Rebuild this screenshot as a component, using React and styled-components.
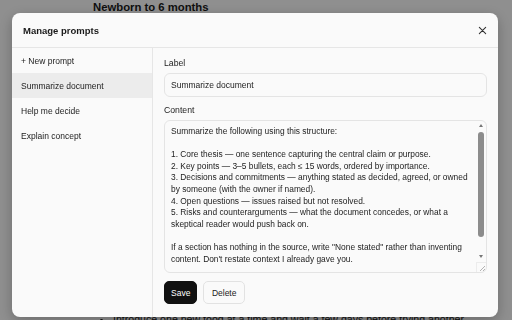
import React from 'react'
import styled, { createGlobalStyle } from 'styled-components'

const prompts = ['Summarize document', 'Help me decide', 'Explain concept']

const content = `Summarize the following using this structure:

1. Core thesis — one sentence capturing the central claim or purpose.
2. Key points — 3–5 bullets, each ≤ 15 words, ordered by importance.
3. Decisions and commitments — anything stated as decided, agreed, or owned by someone (with the owner if named).
4. Open questions — issues raised but not resolved.
5. Risks and counterarguments — what the document concedes, or what a skeptical reader would push back on.

If a section has nothing in the source, write "None stated" rather than inventing content. Don't restate context I already gave you.`

const App = () => {
  return (
    <>
      <GlobalStyle />
      <Page>
        <PageTitle>Newborn to 6 months</PageTitle>
        <PageList>
          <li>Introduce one new food at a time and wait a few days before trying another</li>
        </PageList>
      </Page>

      <Overlay>
        <Modal>
          <ModalHeader>
            <ModalTitle>Manage prompts</ModalTitle>
            <CloseButton aria-label="Close">
              <svg width="9" height="9" viewBox="0 0 10 10">
                <path d="M1.5 1.5 L8.5 8.5 M8.5 1.5 L1.5 8.5" stroke="#333" strokeWidth="1.2" strokeLinecap="round" />
              </svg>
            </CloseButton>
          </ModalHeader>

          <ModalBody>
            <Sidebar>
              <SideItem>+ New prompt</SideItem>
              {prompts.map((name, key) => (
                <SideItem key={key} $active={key === 0}>{name}</SideItem>
              ))}
            </Sidebar>

            <Editor>
              <FieldLabel>Label</FieldLabel>
              <TextInput defaultValue="Summarize document" />
              <FieldLabel>Content</FieldLabel>
              <TextBox>
                <TextArea defaultValue={content} />
                <ScrollRail>
                  <Arrow $up />
                  <Thumb />
                  <Arrow />
                  <Grip>
                    <svg width="8" height="8" viewBox="0 0 8 8">
                      <path d="M7 2 L2 7 M7 5 L5 7" stroke="#a0a0a0" strokeWidth="0.8" />
                    </svg>
                  </Grip>
                </ScrollRail>
              </TextBox>
              <Actions>
                <Button $primary>Save</Button>
                <Button>Delete</Button>
              </Actions>
            </Editor>
          </ModalBody>
        </Modal>
      </Overlay>
    </>
  )
}

const GlobalStyle = createGlobalStyle`
  html, body {
    margin: 0;
    height: 320px;
    overflow: hidden;
    background: #ffffff;
    font-family: "Liberation Sans", Arial, sans-serif;
  }
`

const Page = styled.div`
  padding-left: 93px;
  color: #1a1a1a;
`

const PageTitle = styled.h2`
  margin: 0;
  font-size: 11.3px;
  line-height: 14px;
  font-weight: 700;
`

const PageList = styled.ul`
  margin: 298px 0 0;
  padding-left: 20px;
  font-size: 10.6px;
  line-height: 14px;
  white-space: nowrap;
`

const Overlay = styled.div`
  position: fixed;
  inset: 0;
  background: rgba(0, 0, 0, 0.44);
  display: flex;
  align-items: flex-start;
  padding: 13px 0 0 12px;
`

const Modal = styled.div`
  width: 486px;
  height: 304px;
  background: #fafafa;
  border-radius: 8px;
  box-shadow: 0 4px 14px rgba(0, 0, 0, 0.25);
  display: flex;
  flex-direction: column;
  overflow: hidden;
  color: #222;
`

const ModalHeader = styled.div`
  height: 34px;
  flex-shrink: 0;
  display: flex;
  align-items: center;
  justify-content: space-between;
  padding: 0 10px 0 11px;
  border-bottom: 1px solid #e6e6e6;
`

const ModalTitle = styled.div`
  font-size: 9.5px;
  font-weight: 700;
  color: #1a1a1a;
`

const CloseButton = styled.button`
  border: none;
  background: transparent;
  padding: 0;
  width: 12px;
  height: 12px;
  display: flex;
  align-items: center;
  justify-content: center;
`

const ModalBody = styled.div`
  flex: 1;
  display: grid;
  grid-template-columns: 141px 1fr;
  min-height: 0;
`

const Sidebar = styled.div`
  border-right: 1px solid #e6e6e6;
  display: flex;
  flex-direction: column;
`

const SideItem = styled.div`
  height: 25px;
  display: flex;
  align-items: center;
  padding-left: 9px;
  font-size: 8.5px;
  color: #222;
  background: ${p => (p.$active ? '#ececec' : 'transparent')};
`

const Editor = styled.div`
  display: flex;
  flex-direction: column;
  padding: 9px 11px 0 11px;
  min-width: 0;
`

const FieldLabel = styled.div`
  font-size: 8.7px;
  line-height: 12px;
  color: #222;
  margin-bottom: 4px;
`

const TextInput = styled.input`
  height: 24px;
  box-sizing: border-box;
  border: 1px solid #e4e4e4;
  border-radius: 6px;
  background: #fafafa;
  padding: 0 6px;
  font-family: inherit;
  font-size: 8.5px;
  color: #222;
  margin-bottom: 7px;
  outline: none;
`

const TextBox = styled.div`
  height: 153px;
  box-sizing: border-box;
  display: flex;
  border: 1px solid #e4e4e4;
  border-radius: 6px;
  background: #fafafa;
`

const TextArea = styled.textarea`
  flex: 1;
  min-width: 0;
  border: none;
  background: transparent;
  padding: 5px 1px 5px 6px;
  font-family: inherit;
  font-size: 8.4px;
  line-height: 11.6px;
  color: #222;
  resize: none;
  overflow: hidden;
  outline: none;
`

const ScrollRail = styled.div`
  width: 10px;
  display: flex;
  flex-direction: column;
  align-items: center;
  padding-top: 3px;
`

const Arrow = styled.div`
  width: 0;
  height: 0;
  border-left: 2.5px solid transparent;
  border-right: 2.5px solid transparent;
  ${p => (p.$up
    ? 'border-bottom: 3px solid #767676; margin-bottom: 5px;'
    : 'border-top: 3px solid #767676; margin-top: auto; margin-bottom: 4px;')}
`

const Thumb = styled.div`
  width: 6px;
  height: 105px;
  border-radius: 3px;
  background: #8c8c8c;
`

const Grip = styled.div`
  width: 10px;
  height: 10px;
  display: flex;
  align-items: flex-end;
  justify-content: flex-end;
  border-top: 1px solid #ececec;
  border-left: 1px solid #ececec;
  box-sizing: border-box;
`

const Actions = styled.div`
  display: flex;
  gap: 6px;
  margin-top: 8px;
`

const Button = styled.button`
  height: 23px;
  box-sizing: border-box;
  padding: 0 ${p => (p.$primary ? '6px' : '7.5px')};
  border-radius: 5px;
  border: 1px solid ${p => (p.$primary ? '#111' : '#e2e2e2')};
  background: ${p => (p.$primary ? '#111' : '#fafafa')};
  color: ${p => (p.$primary ? '#fff' : '#222')};
  font-family: inherit;
  font-size: 8.5px;
`

export default App
